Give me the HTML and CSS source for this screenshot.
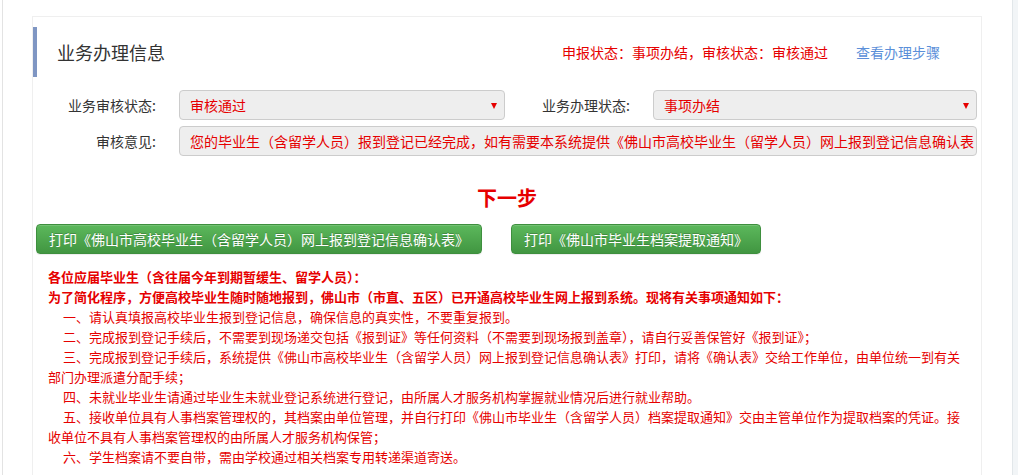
FILE: index.html
```html
<!DOCTYPE html>
<html lang="zh-CN">
<head>
    <meta charset="UTF-8">
    <meta name="viewport" content="width=device-width, initial-scale=1.0">
    <title>业务办理信息</title>
    <link rel="stylesheet" href="styles.css">
</head>
<body>
    <div class="page">
        <div class="main">
            <div class="card">
                <div class="card-head">
                    <h2 class="card-title">业务办理信息</h2>
                    <span class="status">申报状态：事项办结，审核状态：审核通过</span>
                    <a class="steps-link" href="#">查看办理步骤</a>
                </div>

                <div class="form">
                    <label class="form-label">业务审核状态:</label>
                    <div class="select">审核通过</div>
                    <label class="form-label">业务办理状态:</label>
                    <div class="select">事项办结</div>
                    <label class="form-label">审核意见:</label>
                    <div class="field field-wide">您的毕业生（含留学人员）报到登记已经完成，如有需要本系统提供《佛山市高校毕业生（留学人员）网上报到登记信息确认表</div>
                </div>

                <div class="next-step">下一步</div>

                <div class="actions">
                    <button class="btn-print">打印《佛山市高校毕业生（含留学人员）网上报到登记信息确认表》</button>
                    <button class="btn-print">打印《佛山市毕业生档案提取通知》</button>
                </div>

                <div class="notice">
                    <p class="notice-strong">各位应届毕业生（含往届今年到期暂缓生、留学人员）：</p>
                    <p class="notice-strong">为了简化程序，方便高校毕业生随时随地报到，佛山市（市直、五区）已开通高校毕业生网上报到系统。现将有关事项通知如下：</p>
                    <p class="notice-item">一、请认真填报高校毕业生报到登记信息，确保信息的真实性，不要重复报到。</p>
                    <p class="notice-item">二、完成报到登记手续后，不需要到现场递交包括《报到证》等任何资料（不需要到现场报到盖章），请自行妥善保管好《报到证》；</p>
                    <p class="notice-item">三、完成报到登记手续后，系统提供《佛山市高校毕业生（含留学人员）网上报到登记信息确认表》打印，请将《确认表》交给工作单位，由单位统一到有关部门办理派遣分配手续；</p>
                    <p class="notice-item">四、未就业毕业生请通过毕业生未就业登记系统进行登记，由所属人才服务机构掌握就业情况后进行就业帮助。</p>
                    <p class="notice-item">五、接收单位具有人事档案管理权的，其档案由单位管理，并自行打印《佛山市毕业生（含留学人员）档案提取通知》交由主管单位作为提取档案的凭证。接收单位不具有人事档案管理权的由所属人才服务机构保管；</p>
                    <p class="notice-item">六、学生档案请不要自带，需由学校通过相关档案专用转递渠道寄送。</p>
                </div>
            </div>
        </div>
        <div class="scroll-strip"></div>
    </div>
</body>
</html>
```

FILE: styles.css
```css
html, body {
    margin: 0;
    height: 100%;
    overflow: hidden;
}
body {
    font-family: "Noto Sans CJK SC", "Liberation Sans", sans-serif;
    font-size: 14px;
    color: #333;
    background: #fff;
}
.page {
    display: flex;
    height: 475px;
}
.main {
    flex: 1;
    margin-left: 2px;
    border-left: 1px solid #e3e3e3;
    padding: 16px 30px 0 29px;
}
.scroll-strip {
    width: 5px;
    border-left: 1px solid #e2e7ea;
    background: #f2f5f7;
}
.card {
    border: 1px solid #efefef;
    border-bottom: none;
    height: 100%;
    box-sizing: border-box;
}
.card-head {
    display: flex;
    align-items: center;
    height: 50px;
    margin-top: 10px;
    border-left: 4px solid #7f96c3;
    padding: 0 41px 0 20px;
}
.card-title {
    margin: 0;
    font-size: 18px;
    font-weight: normal;
    color: #333;
}
.status {
    margin-left: auto;
    color: #e60000;
}
.steps-link {
    margin-left: 28px;
    color: #5b8fd9;
    text-decoration: none;
}
.form {
    display: grid;
    grid-template-columns: 146px 326px 148px 1fr;
    row-gap: 6px;
    margin-top: 13px;
    padding-right: 4px;
}
.form-label {
    text-align: right;
    padding-right: 23px;
    line-height: 30px;
    color: #333;
}
.select, .field {
    height: 30px;
    box-sizing: border-box;
    line-height: 28px;
    padding-left: 10px;
    border: 1px solid #ccc;
    border-radius: 4px;
    background: #eee;
    color: #e60000;
    white-space: nowrap;
    overflow: hidden;
}
.select {
    position: relative;
}
.select::after {
    content: "";
    position: absolute;
    right: 7px;
    top: 12px;
    border-left: 3px solid transparent;
    border-right: 3px solid transparent;
    border-top: 6px solid #e60000;
}
.field-wide {
    grid-column: 2 / -1;
}
.next-step {
    margin-top: 28px;
    text-align: center;
    font-size: 20px;
    line-height: 28px;
    font-weight: bold;
    color: #e60000;
}
.actions {
    display: flex;
    gap: 29px;
    margin-top: 12px;
    padding-left: 3px;
}
.btn-print {
    height: 30px;
    padding: 0 12px;
    font-family: inherit;
    font-size: 14px;
    line-height: 28px;
    color: #fff;
    border: 1px solid #3e8f3e;
    border-radius: 4px;
    background: linear-gradient(#5cb85c, #419641);
    text-shadow: 0 -1px 0 rgba(0, 0, 0, 0.2);
    box-shadow: inset 0 1px 0 rgba(255, 255, 255, 0.15), 0 1px 1px rgba(0, 0, 0, 0.075);
    cursor: pointer;
}
.notice {
    margin-top: 13px;
    padding: 0 15px;
    font-size: 13px;
    line-height: 20px;
    color: #e60000;
}
.notice p {
    margin: 0;
}
.notice-strong {
    font-weight: bold;
}
.notice-item {
    text-indent: 15px;
}
```
